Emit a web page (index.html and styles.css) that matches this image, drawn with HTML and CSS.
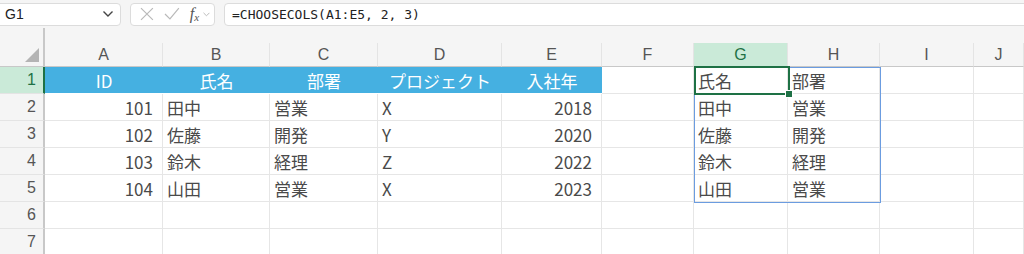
FILE: index.html
```html
<!DOCTYPE html>
<html lang="ja">
<head>
<meta charset="UTF-8" />
<title>CHOOSECOLS</title>
<link rel="stylesheet" href="styles.css">
</head>
<body>

<div class="formula-bar">
  <div class="name-box">
    <span>G1</span>
    <svg class="chev" width="12" height="8" viewBox="0 0 12 8"><path d="M1.5 1.5 L6 6 L10.5 1.5" fill="none" stroke="#444" stroke-width="1.4"/></svg>
  </div>
  <div class="fx-box">
    <svg width="14" height="14" viewBox="0 0 14 14"><path d="M1 1 L13 13 M13 1 L1 13" stroke="#b9b9b9" stroke-width="1.2"/></svg>
    <svg width="16" height="14" viewBox="0 0 16 14"><path d="M1 7 L6 12 L15 1" fill="none" stroke="#b9b9b9" stroke-width="1.2"/></svg>
    <span class="fx">f<sub>x</sub></span>
    <svg width="7" height="5" viewBox="0 0 7 5"><path d="M0.5 0.8 L3.5 3.8 L6.5 0.8" fill="none" stroke="#bbb" stroke-width="1"/></svg>
  </div>
  <div class="formula">=CHOOSECOLS(A1:E5, 2, 3)</div>
</div>

<div class="sheet">
  <div class="row spacer">
    <div class="corner-top"></div>
  </div>
  <div class="row col-heads">
    <div class="corner"><span class="tri"></span></div>
    <div>A</div><div>B</div><div>C</div><div>D</div><div>E</div><div>F</div>
    <div class="on">G</div><div>H</div><div>I</div><div>J</div>
  </div>

  <div class="row">
    <div class="rh on">1</div>
    <div class="hd">ID</div><div class="hd">氏名</div><div class="hd">部署</div><div class="hd">プロジェクト</div><div class="hd">入社年</div>
    <div></div><div>氏名</div><div>部署</div><div></div><div></div>
  </div>
  <div class="row">
    <div class="rh">2</div>
    <div class="num">101</div><div>田中</div><div>営業</div><div>X</div><div class="num">2018</div>
    <div></div><div>田中</div><div>営業</div><div></div><div></div>
  </div>
  <div class="row">
    <div class="rh">3</div>
    <div class="num">102</div><div>佐藤</div><div>開発</div><div>Y</div><div class="num">2020</div>
    <div></div><div>佐藤</div><div>開発</div><div></div><div></div>
  </div>
  <div class="row">
    <div class="rh">4</div>
    <div class="num">103</div><div>鈴木</div><div>経理</div><div>Z</div><div class="num">2022</div>
    <div></div><div>鈴木</div><div>経理</div><div></div><div></div>
  </div>
  <div class="row">
    <div class="rh">5</div>
    <div class="num">104</div><div>山田</div><div>営業</div><div>X</div><div class="num">2023</div>
    <div></div><div>山田</div><div>営業</div><div></div><div></div>
  </div>
  <div class="row">
    <div class="rh">6</div>
    <div></div><div></div><div></div><div></div><div></div><div></div><div></div><div></div><div></div><div></div>
  </div>
  <div class="row">
    <div class="rh">7</div>
    <div></div><div></div><div></div><div></div><div></div><div></div><div></div><div></div><div></div><div></div>
  </div>

  <!-- spill range + active cell -->
  <div class="spill-range"></div>
  <div class="active-cell"><span class="handle"></span></div>
</div>

</body>
</html>
```

FILE: styles.css
```css
body {
  margin: 0;
  background: #f5f5f5;
  font-family: "Noto Sans CJK JP", "Noto Sans", sans-serif;
  color: #4a4a4a;
  overflow: hidden;
  width: 1024px;
  height: 254px;
}
.formula-bar {
  height: 28px;
  display: flex;
  align-items: center;
  gap: 9px;
  box-sizing: border-box;
}
.name-box, .fx-box, .formula {
  height: 23px;
  background: #fff;
  border: 1px solid #dcdcdc;
  border-radius: 4px;
  box-sizing: border-box;
  display: flex;
  align-items: center;
}
.name-box {
  width: 125px;
  margin-left: -4px;
  padding: 0 6px 0 8px;
  justify-content: space-between;
  font-family: "Liberation Sans", sans-serif;
  font-size: 14px;
  color: #222;
}
.fx-box {
  width: 85px;
  padding: 0 4px 0 9px;
  gap: 10px;
}
.fx {
  font-family: "Liberation Serif", serif;
  font-style: italic;
  font-size: 16px;
  color: #555;
  margin-right: -6px;
  line-height: 1;
}
.fx sub {
  font-size: 11px;
  vertical-align: -2px;
}
.formula {
  flex: 1;
  margin-right: -6px;
  padding-left: 7px;
  font-family: "DejaVu Sans Mono", monospace;
  font-size: 13px;
  color: #222;
}

.sheet {
  position: relative;
}
.row {
  display: grid;
  grid-template-columns: 45px 118px 107px 108px 124px 100px 92px 94px 92px 94px 50px;
  height: 27px;
}
.row > div {
  background: #fff;
  border-right: 1px solid #e6e6e6;
  border-bottom: 1px solid #e6e6e6;
  box-sizing: border-box;
  display: flex;
  align-items: center;
  padding: 0 4px;
  font-size: 17px;
  white-space: nowrap;
  overflow: hidden;
}
.row.spacer {
  height: 15px;
}
.row.spacer > div {
  background: #f5f5f5;
  border-bottom: none;
  border-right: 2px solid #c8c8c8;
}
.row.col-heads {
  height: 24px;
}
.row.col-heads > div {
  background: #f5f5f5;
  justify-content: center;
  font-family: "Liberation Sans", sans-serif;
  font-size: 16px;
  color: #555;
  border-bottom: 1px solid #c8c8c8;
  border-right: 1px solid #e4e4e4;
}
.row.col-heads > div.on {
  background: #caead8;
  color: #1e7145;
}
.row.col-heads > .corner {
  border-right: 2px solid #c8c8c8;
  position: relative;
}
.tri {
  position: absolute;
  right: 4px;
  bottom: 4px;
  width: 0;
  height: 0;
  border-left: 14px solid transparent;
  border-bottom: 14px solid #b4b4b4;
}
.row > .rh {
  background: #f5f5f5;
  justify-content: flex-end;
  padding-right: 7px;
  font-family: "Liberation Sans", sans-serif;
  font-size: 16px;
  color: #555;
  border-right: 2px solid #c8c8c8;
  border-bottom: 1px solid #e4e4e4;
}
.row > .rh.on {
  background: #caead8;
  color: #1e7145;
  border-right: 2px solid #1e7145;
}
.row > .hd {
  background: #45b0e1;
  color: #fff;
  justify-content: center;
  border-right: none;
  border-bottom: 1px solid #fff;
}
.row > .num {
  justify-content: flex-end;
  padding-right: 9px;
}

.spill-range {
  position: absolute;
  left: 694px;
  top: 39px;
  width: 187px;
  height: 136px;
  border: 1px solid #6b9ce0;
  box-sizing: border-box;
  pointer-events: none;
}
.active-cell {
  position: absolute;
  left: 694px;
  top: 38px;
  width: 96px;
  height: 29px;
  border: 2px solid #1e7145;
  box-sizing: border-box;
}
.handle {
  position: absolute;
  right: -5px;
  bottom: -5px;
  width: 6px;
  height: 6px;
  background: #1e7145;
  border: 1px solid #fff;
}
```
